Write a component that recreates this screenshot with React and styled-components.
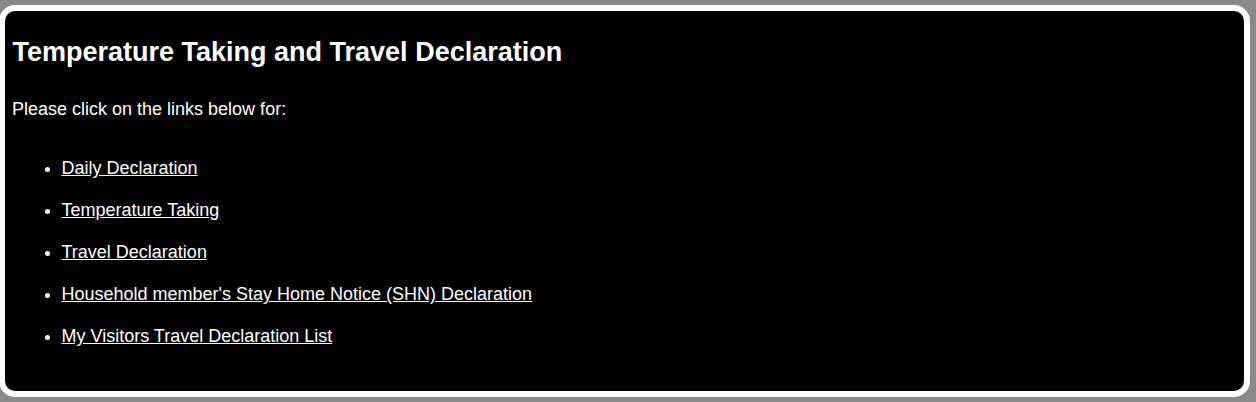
import React from 'react';
import styled, { createGlobalStyle } from 'styled-components';

const GlobalStyle = createGlobalStyle`
  html, body {
    margin: 0;
    padding: 0;
    background: #898989;
  }
  body {
    font-family: "Liberation Sans", Arial, sans-serif;
  }
`;

// Styled Components
const Page = styled.div`
  padding: 5px 6px 5px 0;
  min-height: 402px;
  box-sizing: border-box;
`;

const Card = styled.section`
  margin-left: -1px;
  background: #000;
  color: #fff;
  border: 6px solid #fff;
  border-radius: 16px;
  padding: 0 6px 44px 7px;
`;

const Title = styled.h2`
  margin: 26px 0 0;
  padding-left: 0.5px;
  font-size: 27px;
  font-weight: bold;
  line-height: normal;
`;

const Intro = styled.p`
  margin: 31px 0 0;
  font-size: 18px;
  line-height: normal;
`;

const LinkList = styled.ul`
  margin: 38.3px 0 0;
  padding-left: 49.5px;
  font-size: 18px;
  line-height: normal;
`;

const Item = styled.li`
  & + & {
    margin-top: 21px;
  }
`;

const ItemLink = styled.a`
  color: #fff;
  text-decoration: underline;
`;

const links = [
  'Daily Declaration',
  'Temperature Taking',
  'Travel Declaration',
  "Household member's Stay Home Notice (SHN) Declaration",
  'My Visitors Travel Declaration List'
];

export default function App() {
  return (
    <>
      <GlobalStyle />
      <Page>
        <Card>
          <Title>Temperature Taking and Travel Declaration</Title>
          <Intro>Please click on the links below for:</Intro>
          <LinkList>
            {links.map(label => (
              <Item key={label}>
                <ItemLink href="#">{label}</ItemLink>
              </Item>
            ))}
          </LinkList>
        </Card>
      </Page>
    </>
  );
}
